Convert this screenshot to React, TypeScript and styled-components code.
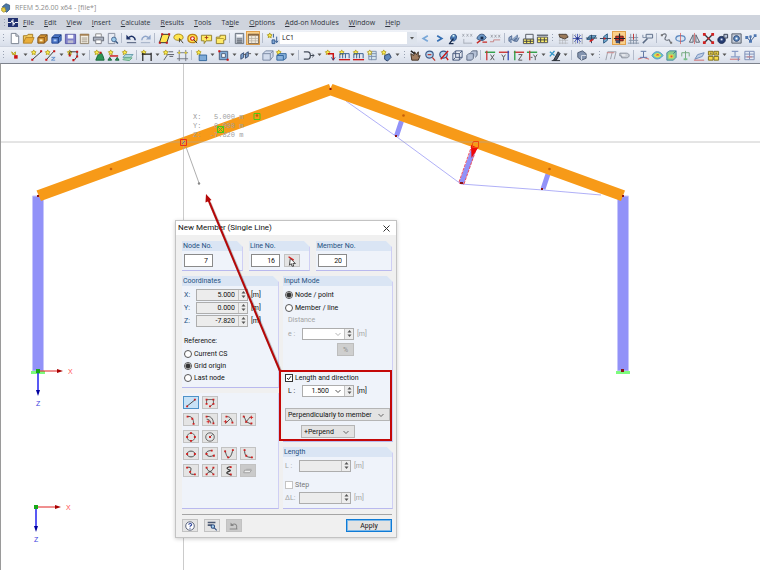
import { useState } from "react";
import styled, { createGlobalStyle, css } from "styled-components";

const GlobalStyle = createGlobalStyle`
  * {
    box-sizing: border-box;
  }
  body {
    margin: 0;
    background: #fff;
  }
  button, input, select {
    font: inherit;
    color: inherit;
    margin: 0;
    padding: 0;
  }
`;

const Window = styled.div`
  display: flex;
  flex-direction: column;
  min-height: 100vh;
  font: 7px/10px Roboto, "Liberation Sans", sans-serif;
  color: #111;
`;
const TitleBar = styled.header`
  display: flex;
  align-items: center;
  gap: 4px;
  height: 15px;
  padding-left: 1px;
  font-family: "Open Sans", sans-serif;
  color: #8c8c8c;
`;
const MenuBar = styled.nav`
  display: flex;
  align-items: center;
  gap: 10px;
  height: 15px;
  padding-left: 1px;
  background: #cfd4dd;
  font-family: "Open Sans", sans-serif;
  color: #30343e;
  overflow: hidden;
`;
const MenuLogo = styled.span`
  display: flex;
  align-items: center;
  margin-right: -5px;
`;
const MenuButton = styled.button`
  border: 0;
  background: none;
  white-space: nowrap;
`;
const ToolBar = styled.div`
  display: flex;
  align-items: center;
  height: 17px;
  background: linear-gradient(#eff2f8, #e3e8f1 60%, #d8deea);
  border-bottom: 1px solid #cdd3df;
  overflow: hidden;
  & + & {
    height: 16px;
    border-bottom: 0;
  }
`;
const Grip = styled.span`
  flex: none;
  width: 7px;
  height: 10px;
  background: radial-gradient(circle, #9aa3b3 0 1px, transparent 1px) 2px 0 / 3px 3px repeat-y;
`;
const Separator = styled.span`
  flex: none;
  width: 5px;
  height: 10px;
  border-left: 1px solid #b4bccb;
  margin-left: 2px;
  margin-right: -2px;
`;
const ToolButton = styled.button<{ $active?: boolean }>`
  display: flex;
  align-items: center;
  justify-content: center;
  flex: none;
  width: 14px;
  height: 14px;
  border: 0;
  background: none;
  ${(p) =>
    p.$active &&
    css`
      background: #fbd08a;
      box-shadow: inset 0 0 0 1px #e0a04c;
    `}
`;
const MoreButton = styled.button`
  display: flex;
  align-items: center;
  justify-content: center;
  flex: none;
  width: 8px;
  height: 14px;
  border: 0;
  background: none;
`;
const LoadCase = styled.label`
  display: grid;
  grid-template-columns: 1fr 10px;
  align-items: center;
  flex: none;
  width: 137px;
  height: 12px;
  margin: 0 1px;
  background: #fff;
  font-family: "Open Sans", sans-serif;
  select {
    grid-area: 1 / 1 / 2 / 3;
    appearance: none;
    border: 0;
    padding-left: 2px;
    background: none;
  }
  svg {
    grid-area: 1 / 2;
    width: 10px;
    height: 12px;
    background: #dde3ec;
    pointer-events: none;
  }
`;

const Canvas = styled.main`
  position: relative;
  flex: 1;
  min-height: 500px;
  overflow: hidden;
  border-top: 1px solid #7d828c;
  border-left: 1px solid #9a9a9a;
  background: #fff;
`;
const Drawing = styled.svg`
  position: absolute;
  top: 0;
  left: 0;
  overflow: visible;
  pointer-events: none;
`;

const Dialog = styled.form`
  position: absolute;
  top: 156px;
  left: 174px;
  width: 222px;
  border: 1px solid #c3c3c3;
  background: #f0f0f0;
  box-shadow: 0 1px 4px rgba(0, 0, 0, 0.2);
`;
const DialogTitle = styled.div`
  display: flex;
  align-items: center;
  justify-content: space-between;
  height: 14px;
  padding: 0 6px 0 2px;
  background: #fff;
  font-size: 8px;
`;
const CloseButton = styled.button`
  display: flex;
  border: 0;
  background: none;
`;
const DialogBody = styled.div`
  display: flex;
  flex-direction: column;
  gap: 5px;
  padding: 6px 4px 5px 6px;
`;
const TopRow = styled.div`
  display: grid;
  grid-template-columns: 61px 61px 1fr;
  gap: 6px;
`;
const Columns = styled.div`
  display: grid;
  grid-template-columns: 97px 1fr;
  gap: 4px;
`;
const Column = styled.div`
  display: flex;
  flex-direction: column;
  gap: 5px;
`;
const Group = styled.fieldset<{ $grow?: boolean }>`
  display: flex;
  flex-direction: column;
  flex: ${(p) => (p.$grow ? 1 : "none")};
  min-width: 0;
  margin: 0;
  padding: 0;
  border: 0;
  border-right: 1px solid #cfcff4;
  border-bottom: 1px solid #b9b9ee;
  background: #eff3fa;
  clip-path: polygon(0 0, calc(100% - 6px) 0, 100% 6px, 100% 100%, 0 100%);
`;
const GroupTitle = styled.div`
  height: 10px;
  padding-left: 1px;
  background: #dae5f4;
  color: #24507f;
`;
const GroupBody = styled.div<{ $height: number }>`
  display: flex;
  flex-direction: column;
  min-height: ${(p) => p.$height}px;
  padding: 2px;
`;
const NumberRow = styled.div`
  display: flex;
  align-items: center;
  gap: 4px;
  height: 15px;
`;
const NumberInput = styled.input`
  width: 29px;
  height: 13px;
  padding-right: 4px;
  border: 1px solid #8a8a8a;
  background: #fff;
  text-align: right;
`;
const FieldRow = styled.div<{ $muted?: boolean; $indent?: boolean }>`
  display: flex;
  align-items: center;
  gap: 3px;
  height: 13px;
  padding-left: ${(p) => (p.$indent ? 3 : 0)}px;
  color: ${(p) => (p.$muted ? "#a3a3a3" : "#111")};
`;
const FieldLabel = styled.label<{ $wide?: boolean }>`
  width: ${(p) => (p.$wide ? 11 : 9)}px;
  color: ${(p) => (p.$wide ? "inherit" : "#24507f")};
`;
const SpinBox = styled.span<{ $readonly?: boolean }>`
  display: flex;
  width: 52px;
  height: 12px;
  border: 1px solid #adadad;
  background: ${(p) => (p.$readonly ? "#ececec" : "#fff")};
  input {
    flex: 1;
    min-width: 0;
    padding-right: 3px;
    border: 0;
    background: none;
    text-align: right;
  }
`;
const DropButton = styled.button`
  display: flex;
  align-items: center;
  border: 0;
  padding: 0 2px;
  background: none;
`;
const Spinner = styled.span`
  display: flex;
  flex-direction: column;
  width: 9px;
  border-left: 1px solid #c4c4c4;
  background: #ededed;
  button {
    display: flex;
    align-items: center;
    justify-content: center;
    flex: 1;
    height: 5px;
    border: 0;
    background: none;
  }
`;
const Choice = styled.label<{ $muted?: boolean; $tall?: boolean }>`
  display: flex;
  align-items: center;
  gap: 2px;
  height: ${(p) => (p.$tall ? 13 : 12)}px;
  color: ${(p) => (p.$muted ? "#777" : "#111")};
  white-space: nowrap;
`;
const Radio = styled.input`
  appearance: none;
  width: 8px;
  height: 8px;
  border: 1px solid #555;
  border-radius: 50%;
  background: #fff;
  &:checked {
    background: radial-gradient(circle, #333 0 2px, #fff 3px);
  }
`;
const Check = styled.input`
  appearance: none;
  width: 8px;
  height: 8px;
  border: 1px solid #333;
  background: #fff;
  &:checked {
    background: #fff
      url("data:image/svg+xml,%3Csvg xmlns='http://www.w3.org/2000/svg' viewBox='0 0 6 6'%3E%3Cpath d='M1 3l1.5 1.6L5 1.2' fill='none' stroke='%23222'/%3E%3C/svg%3E");
  }
  &:disabled {
    border-color: #c4c4c4;
  }
`;
const Caption = styled.div<{ $muted?: boolean }>`
  padding-left: ${(p) => (p.$muted ? 3 : 0)}px;
  height: 13px;
  line-height: 13px;
  color: ${(p) => (p.$muted ? "#a3a3a3" : "#111")};
`;
const PercentButton = styled.button`
  align-self: flex-start;
  width: 17px;
  height: 13px;
  margin: 3px 0 0 52px;
  border: 1px solid #bdbdbd;
  background: #cfcfcf;
  color: #8f8f8f;
`;
const Spacer = styled.div<{ $size: number }>`
  flex: none;
  height: ${(p) => p.$size}px;
`;
const SelectBox = styled.label<{ $width: string; $inset?: boolean }>`
  display: grid;
  grid-template-columns: 1fr 12px;
  align-items: center;
  width: ${(p) => p.$width};
  margin-left: ${(p) => (p.$inset ? 16 : 0)}px;
  border: 1px solid #b5b5b5;
  background: #e3e3e3;
  select {
    grid-area: 1 / 1 / 2 / 3;
    appearance: none;
    height: 11px;
    padding-left: 2px;
    border: 0;
    background: none;
  }
  svg {
    grid-area: 1 / 2;
    pointer-events: none;
  }
`;
const ToolPanel = styled(Group)`
  clip-path: none;
  padding: 3px 1px;
`;
const ToolGrid = styled.div`
  display: grid;
  grid-template-columns: repeat(4, 16px);
  grid-auto-rows: 13px;
  gap: 4px 3px;
`;
const SmallButton = styled.button<{ $first?: boolean; $active?: boolean; $off?: boolean }>`
  display: flex;
  align-items: center;
  justify-content: center;
  width: 16px;
  height: 13px;
  ${(p) => p.$first && "grid-column-start: 1;"}
  border: 1px solid ${(p) => (p.$active ? "#4d92c8" : "#c2c2c2")};
  background: ${(p) => (p.$active ? "#c8e2f6" : p.$off ? "#cacaca" : "#e4e4e4")};
`;
const Footer = styled.div`
  display: flex;
  align-items: center;
  gap: 6px;
  padding-top: 4px;
  border-top: 1px solid #a5a5a5;
`;
const ApplyButton = styled.button`
  width: 46px;
  height: 13px;
  margin-left: auto;
  border: 1px solid #0f7bd6;
  outline: 1px solid #7db9ea;
  outline-offset: -2px;
  background: #e3e3e3;
`;

// every shape is [path, stroke, fill, stroke width], on a 14 by 14 grid
type Shape = [string, string?, string?, number?];

const star = "M4 1l.8 1.7 1.8.3-1.3 1.3.3 1.8L4 5.3l-1.6.8.3-1.8L1.4 3l1.8-.3z";
const dot = (x: number, y: number, r = 1.1) => `M${x - r} ${y - r}h${2 * r}v${2 * r}h${-2 * r}z`;

const icons: Record<string, Shape[]> = {
  newFile: [["M3.5 1.5h5l3 3v8h-8z", "#777f8c", "#fff"], ["M8.5 1.5v3h3", "#777f8c"]],
  open: [["M1.5 12V4h4l1-1.5h5V6", "#a57a20", "#f1cb62"], ["M1.5 12l2.5-6h9l-2.5 6z", "#b58428", "#e9ae3b"]],
  boxBrown: [["M2 6l3-3h7v6l-3 3H2z", "#744c18", "#d39331"], ["M2 6h7v6M9 6l3-3", "#8b581b"], ["M4 8h3v2H4z", "", "#fff0be"]],
  boxBlue: [["M2 6l3-3h7v6l-3 3H2z", "#284a93", "#4c78c9"], ["M2 6h7v6M9 6l3-3", "#183978"], ["M4 8h3v2H4z", "", "#b7cef3"]],
  save: [["M1.5 2.5h11v10h-11z", "#5757a5", "#8181ca"], ["M4 3h6v4H4z", "", "#f5f5fb"], ["M4 9h6v3H4z", "", "#bcbccf"]],
  sheet: [["M2.5 2.5h9v10h-9z", "#8d7d67", "#f4eee1"], ["M2 2h10v2H2z", "", "#a48052"], ["M4 6.5h6M4 8.5h6M4 10.5h6", "#a39a8c"]],
  print: [["M4 5V2h6v3", "#888", "#fff"], ["M1.5 5.5h11v4h-11z", "#606774", "#aab1bf"], ["M4 8.5h6v4H4z", "#7c7f88", "#fff"]],
  preview: [["M2.5 1.5h7v11h-7z", "#8890a0", "#e7ebf3"], ["M6 8a2.5 2.5 0 1 0 5 0 2.5 2.5 0 1 0-5 0", "#45658e", "#9ccbeb"], ["M10.4 10l2.4 2.4", "#38557c", "", 1.6]],
  undo: [["M3 7c4-5 8-1 8 2", "#1c3065", "", 1.6], ["M1.5 3v5h5z", "", "#1c3065"], ["M2 11.5h10", "#44516f"]],
  redo: [["M11 7c-4-5-8-1-8 2", "#8fa5c9", "", 1.5], ["M12.5 3v5h-5z", "", "#8fa5c9"], ["M2 11.5h10", "#9eabc1"]],
  plane: [["M4.5 2.5h8l-3 9h-8z", "#292929", "#ffe650"], [dot(4.5, 2.5) + dot(12, 2.5) + dot(9.5, 11.5) + dot(2, 11.5), "", "#c31b1b"]],
  lasso: [["M2 6c0-5 10-5 10 0 0 4-10 4-10 0", "#a48618", "#ffe650"], ["M8 7l4 5M8 7v4", "#463e30"]],
  target: [["M2 7c0-6 10-6 10 0s-10 6-10 0", "#bd8516", "#ffe650", 1.4], ["M5 7c0-2.5 4-2.5 4 0s-4 2.5-4 0", "#ce1515", "#fff", 1.2], ["M8 8l4 4", "#333"]],
  note: [["M1.5 3.5h11v6h-6l-2 3v-3h-3z", "#917f2a", "#ffec62"], ["M7 4v4M5 6h4", "#a43b18"]],
  folder: [["M2.5 5.5h4v-2h6v5h-2v4h-8z", "#8f7a29", "#ffeb69"], ["M2.5 7h8", "#b39a35"]],
  calculator: [["M2.5 1.5h9v11h-9z", "#666e79", "#cbd0d9"], ["M4 3h6v2H4z", "", "#fff"], ["M4 7.5h6M4 9.5h6M4 11h6", "#4c535d"]],
  table: [["M1.5 2.5h11v10h-11z", "#76624c", "#f1e9dc"], ["M1 2h12v2H1z", "", "#8a6844"], ["M5 4v8M9 4v8M2 7h10M2 9.5h10", "#b8b0a2", "", 0.8]],
  loadCase: [[star, "#a89520", "#fff04c"], ["M6.5 8.5h3v4h-3z", "#31598e", "#80a6d5"], ["M8 2v4M11.5 5v6M10 9.5l1.5 2 1.5-2", "#31598e"]],
  prev: [["M9.5 4L4.5 7l5 3", "#78a7d8", "", 1.8]],
  next: [["M4.5 4l5 3-5 3", "#356fb3", "", 1.8]],
  results: [["M4 8c-1-7 8-7 6-1-1 3-3 3-5 2", "#24477c", "#4c7bb4"], ["M7 7l-4 5M2 12.5h5", "#182b4d", "", 1.4], ["M6 3h2v2H6z", "", "#dff"]],
  values: [["M1.5 2l2 3M3.5 2l-2 3M6 2l2 3M8 2L6 5M10 2l2 3M12 2l-2 3", "#9a9fa8", "", 0.8], ["M3 7.5v5M3 12h9", "#a7adb8"]],
  view: [["M2 7c2-6 8-6 10-1-2 4-7 4-10 1z", "#35527b", "#6e9ac8"], ["M6 5h3v3H6z", "", "#172b4c"], ["M2 12l4-3M8 11h5", "#c62a24", "", 1.4]],
  numbers: [["M2 3l2 3M4 3L2 6M6 3l2 3M8 3L6 6M10 3l2 3M12 3l-2 3", "#92969e", "", 0.8], ["M1 10.5h4v-2h7", "#c68282"]],
  glasses: [["M1 10V6l3-2v4l3 2 3-4V3M4 8c-3 0-3 4 0 3M9 7c-3 0-3 4 1 3l2-4", "#536b92", "#8fa6c6"]],
  tableGear: [["M1.5 7.5h11v5h-11z", "#494c54", "#fff16a"], ["M4 2.5h8v5H4z", "#51565f", "#e9eef5"], ["M5 8v4M9 8v4M2 10h10", "#3b3e44"]],
  tableSum: [["M1.5 5.5h11v6h-11z", "#494c54", "#fff16a"], ["M5 6v5M9 6v5M2 8.5h10", "#3b3e44"], ["M1 3.5h12", "#69707d", "", 1.6]],
  snapHand: [["M2 3h10M2 6h10M2 9h10M2 12h10M3 2v11M6 2v11M9 2v11", "#b2b4b8", "", 0.7], ["M2 2.5h8l2 3-4 2-5-2z", "#4d4035", "#9b7a5a"]],
  snapGrid: [["M2 2v11M5 2v11M9 2v11M12 2v11", "#888c96", "", 0.7], ["M7 2v10M2 7h10M3.5 3.5l7 7M10.5 3.5l-7 7", "#3c4db3", "", 0.9], [dot(7, 7), "", "#1c2a7b"]],
  planeXY: [["M2 8l3-4h7l-3 4z", "#28567f", "#74add1"], ["M1 6.5h12M7 3v9", "#28415c"], ["M5 9l4-2v2l-4 2z", "", "#d22121"]],
  planeYZ: [["M5 5l4-3v7l-4 3z", "#28567f", "#74add1"], ["M1 7h12", "#28415c"], ["M5 6h2v2H5z", "", "#d22121"]],
  planeXZ: [["M3 4.5h8v5H3z", "#661616", "#d3302b"], ["M7 1.5v11M1 7h12", "#1f1f2a", "", 1.3], ["M3 9h4v3H3z", "", "#3e5279"]],
  guide: [["M4 2v11M7 2v11M10 2v11M1 12h12M2 9h10M2 6h10", "#8794a8"], ["M7 2v6", "#c23535"]],
  hammer: [["M2 12l5-5", "#5a6b85", "", 1.6], ["M5.5 2.5h7v4h-7z", "#5a6b85", "#dde5f0"], ["M2 3v3h4", "#7c8ba3"]],
  curve: [["M2 3.5c3-3 6-1 4 2s1 4 3 3 1 3 3 3", "#666c77", "", 1.2], [dot(2, 3.5) + dot(12, 11.5), "", "#777"]],
  rotate: [["M2 7c0-4 10-4 10 0s-10 4-10 0", "#5b88bf", "#dbe7f4", 1.3], ["M7 1v12", "#d65858", "", 0.8]],
  mirror: [["M5.5 3v8H1.5zM8.5 3v8h4z", "#565d69"], ["M7 1v12", "#d65858", "", 0.8]],
  split: [["M3 3l8 8M11 3l-8 8", "#30363f", "", 1.4], [dot(2.5, 2.5, 1.5) + dot(11.5, 2.5, 1.5) + dot(2.5, 11.5, 1.5) + dot(11.5, 11.5, 1.5) + dot(7, 7), "", "#d22121"]],
  solid: [["M2 8.5c0-5 8-5 8 0s-8 5-8 0", "#16254a", "#263d74"], ["M8.5 2.5h4v4h-4z", "#333c4f", "#b8c4db"], ["M5 7h2v2H5z", "", "#e3eaf8"]],
  settings: [["M2 2h10v10H2z", "#535b68", "#c4cbd8"], ["M4 7c0-4 6-4 6 0s-6 4-6 0", "#223d69", "#5785bd"], ["M6 6h2v2H6z", "", "#fff"]],
  network: [["M3 6l4 4 5-6M7 10V4", "#3b5c90"], [dot(3, 6, 1.6) + dot(7, 10, 1.6) + dot(12, 4, 1.5) + dot(7, 5, 1.3), "", "#4f77b1"]],

  node: [["M4 3l2 2 2-2v3H5z", "#b09c20", "#fff04c"], [dot(8.5, 8.5, 1.9), "", "#cc1414"]],
  line: [[star, "#b5a12a", "#fff04c"], ["M3 11l9-8", "#333"], [dot(2.5, 11.5) + dot(12, 2.5), "", "#cc1414"]],
  member: [[star, "#b5a12a", "#fff04c"], ["M3 11l8-9", "#333"], ["M8 9h4l-4 3h4", "#5f8dca"], [dot(2.5, 11.5) + dot(11, 2.5), "", "#cc1414"]],
  polyline: [[star, "#b5a12a", "#fff04c"], ["M4 7V3h8v5l-3 4", "#333"], [dot(4, 7) + dot(12, 3) + dot(12, 8) + dot(8, 12), "", "#cc1414"]],
  support: [[star, "#b5a12a", "#fff04c"], ["M3 12l2-5 4-3 2 4 1 4z", "#19613a", "#2d9554"], [dot(8, 4), "", "#cc1414"]],
  lineSupport: [[star, "#b5a12a", "#fff04c"], ["M3 7.5h9", "#cc1414", "", 1.5], ["M1 12l2-3 2 3zM9 12l2-3 2 3z", "#19613a", "#2d9554"]],
  surfSupport: [[star, "#b5a12a", "#fff04c"], ["M2 9l3-3h8l-3 3z", "#5d97a6", "#b9dfe3"], ["M2 11.5l2-2h8l-3 3z", "#62a785", "#a5dcb9"]],
  dimension: [[star, "#b5a12a", "#fff04c"], ["M2 5.5h10M3 4v9M12 4v9", "#222", "", 1.3]],
  comment: [[star, "#b5a12a", "#fff04c"], ["M2 12l4-6h7M7 3h5M8 8h4", "#555b66"]],
  guideline: [["M3.5 1v12M10.5 1v12M1 4h12M1 10.5h12", "#666c77", "", 0.9], [dot(3.5, 4) + dot(10.5, 4), "", "#d9c531"]],
  surface: [[star, "#b5a12a", "#fff04c"], ["M4.5 6.5h8v6h-8z", "#31649b", "#7fabd8"]],
  opening: [["M2.5 2.5h9v9h-9z", "#4b5e7c", "#7fabd8"], ["M5 5h4v4H5z", "#4b5e7c", "#fff"], [dot(2.5, 2.5) + dot(11.5, 11.5), "", "#cc1414"]],
  solidSet: [["M2 6l3-2v5l-3 2zM7 5l3-2v5l-3 2z", "#374e76", "#7fa2ce"], ["M5 6h3M10 5h3", "#555"]],
  cube: [["M2 5l3-3h8v6l-3 4H2zM2 5h8v7M10 5l3-3", "#7887a2", "#d2dced"]],
  cubeNew: [[star, "#b5a12a", "#fff04c"], ["M2 7l3-2h7v5l-3 2H2zM2 7h7v5", "#31649b", "#8bb3dc"]],
  connect: [["M2 3h4c4 0 4 8 0 8H2M9 7h4", "#434b58", "", 1.3], ["M11 5l2 2-2 2", "#434b58"]],
  nodeLoad: [[star, "#b5a12a", "#fff04c"], ["M4 5h6v7", "#cc1414", "", 1.6], ["M8 9l2 3 2-3", "#284c83"]],
  memberLoad: [[star, "#b5a12a", "#fff04c"], ["M2 5h10M2 5v5M5 5v5M8 5v5M12 5v5", "#31598e"], ["M1 11.5h12", "#cc1414", "", 1.4]],
  surfaceLoad: [["M3 2.5h8v9H3zM3 5h8M3 8h8M6 3v9", "#7c8fac", "#d5e5ef"], [star, "#b5a12a", "#fff8a0"]],
  freeLoad: [[star, "#b5a12a", "#fff04c"], ["M5 7l5-2 2 4-4 4-3-2z", "#253b62", "#6089bd"]],
  pan: [["M3 12L2 5l3 2 1-4 2 3 2-3v5l2-1-2 5z", "#3e2e22", "#a17e61"], ["M2 2l4 3", "#222", "", 1.5]],
  zoomIn: [["M3 6c0-5 8-5 8 0s-8 5-8 0", "#3d5b8a", "#b9d6ee", 1.3], ["M10 9l3 3.5M5 6h4", "#bd3b34", "", 1.4]],
  zoomOut: [["M3 6c0-5 8-5 8 0s-8 5-8 0", "#3d5b8a", "#b9d6ee", 1.3], ["M4 11l8-9M10 9l2 3", "#cc1414", "", 1.5]],
  wire: [["M2 5l3-3h7v7l-3 3H2zM2 5h7v7M9 5l3-3M5 2v7h7M5 9l-3 3", "#46587a"]],
  layers: [["M2 7l2-2h5v5l-2 2H2zM6 4l2-2h5v5l-2 2", "#5b6982", "#b5c1d6"]],
  viewX: [["M1 3.5h11", "#2b9d42", "", 1.5], ["M3 2v10", "#c93434", "", 1.4], ["M7 6l4 6M11 6l-4 6", "#555"]],
  viewY: [["M1 3.5h11", "#c93434", "", 1.5], ["M11 2v10", "#334bb5", "", 1.4], ["M4 6l2 3 2-3M6 9v3", "#555"]],
  viewZ: [["M2 3.5h11", "#c93434", "", 1.5], ["M3 2v10", "#2b9d42", "", 1.4], ["M7 6h4l-4 6h4", "#555"]],
  viewMinus: [["M1 3.5h11", "#2b9d42", "", 1.5], ["M4 2v10", "#c93434", "", 1.4], ["M5 9h2M8 6l2 3 2-3M10 9v3", "#555"]],
  workplane: [["M2 3l5 4M7 2L2 8", "#3596c9", "", 1.5], ["M6 12l5-9 2 2-4 7zM4 12.5h9", "#252a32", "#495465"]],
  render: [["M3 4l5-2 4 3v5l-5 2-4-3z", "#4e5c74", "#8394b0"], ["M7 7h5M7 7v5", "#d9e0eb"]],
  diagram: [["M2 12L4 3h5l-2 8M9 3h4l-2 8", "#999ea7"], ["M3 4h8", "#cf8585"]],
  label: [["M2 4.5h7c4 0 4 5 0 5H4v-2H2z", "#868d98", "#cbd0d8"], ["M4 6.5h4", "#fff"]],
  forces: [["M4 2.5h6M7 3v6", "#566f9f"], ["M1 11l6-2 6 2", "#ce6565"], ["M3 9h8", "#5a7ab5"]],
  contour: [["M1 7c3-6 9-5 12 0-4 5-9 5-12 0", "#5894bd", "#65c7c2"], ["M3 7c3-4 6-3 8 0-3 3-5 3-8 0", "", "#e9de45"], ["M5 7c2-2 3-2 4 0z", "", "#dc5847"]],
  contourBox: [["M2 4l3-2h7v7l-3 3H2z", "#4785a1", "#8bcf8e"], ["M4 6h5v4H4z", "", "#e9de45"], ["M6 7h2v2H6z", "", "#dc4a3a"], ["M9 5l3-3", "#387493"]],
  reactions: [["M7 2v10M3 4h8M3 4v4M11 4v4", "#71a87c"], ["M5 10h4v2H5z", "", "#7ac18b"]],
  section: [["M2 11l3-5 7-2-2 4z", "#6f8cba", "#bfcee6"], ["M1 12h11", "#ce6565"]],
  cells: [["M1.5 2.5h5v4h-5zM7.5 2.5h5v4h-5zM1.5 8h5v4h-5zM7.5 8h5v4h-5z", "#7a6c1c", "#f6da4a"], ["M3 4.5h2M9 4.5h2", "#444"]],
  beam: [["M3 2.5h7M6.5 3v5M2 8.5h10", "#6a82b5"], ["M1 11h11", "#ce6565"], ["M10 9v4", "#6a82b5"]],
  grid: [["M2 2.5h10v9H2zM2 5.5h10M2 8.5h10M7 3v8", "#7c8eb5", "#e4eaf5"], ["M4 8.5h6", "#d37c7c"]],
};

// curve types offered in the member dialog
const curveIcons: Record<string, Shape[]> = {
  single: [["M2 11l10-8", "#333"], [dot(2.5, 11) + dot(11.5, 3), "", "#d02020"]],
  poly: [["M3 8V3h8v5l-4 3", "#555"], [dot(3, 8) + dot(3, 3) + dot(11, 3) + dot(11, 8) + dot(7, 11), "", "#d02020"]],
  arc3: [["M3 3c5-1 7 3 7 8", "#444"], [dot(3, 3) + dot(8.5, 5.5) + dot(10, 11.5), "", "#d02020"]],
  arcCenter: [["M3 3c5-1 8 3 8 8M3 6c3 0 5 2 5 5", "#444"], ["M3 9h4M5 7v4", "#d02020"], [dot(3, 3) + dot(11, 11), "", "#d02020"]],
  arcRadius: [["M4 3c4 0 6 2 7 7M3 11l6-6", "#444"], ["M1 9h4M3 7v4", "#d02020"], [dot(4, 3) + dot(11, 10), "", "#d02020"]],
  arcTangent: [["M2 2l3 7 6 3M4 10l6-7", "#444"], ["M9 4h4M11 2v4", "#d02020"], [dot(2, 3) + dot(5, 9) + dot(11, 11), "", "#d02020"]],
  circle3: [["M2.5 7c0-6 9-6 9 0s-9 6-9 0", "#555"], [dot(7, 2.5) + dot(2.5, 7) + dot(11.5, 7) + dot(7, 11.5), "", "#d02020"]],
  circle: [["M2 7c0-6.5 10-6.5 10 0s-10 6.5-10 0M7 7l3-3", "#555"], [dot(7, 7), "", "#d02020"]],
  ellipse: [["M2.5 7c0-4.5 9-4.5 9 0s-9 4.5-9 0", "#333"], [dot(2.5, 7) + dot(11.5, 7), "", "#d02020"]],
  ellipseArc: [["M9 3C2 3 1 7 4 9s7 0 8-1", "#333"], [dot(9, 3) + dot(3, 7) + dot(11.5, 9), "", "#d02020"]],
  parabola: [["M2.5 3c2 10 6 12 9-1", "#333"], [dot(2.5, 4) + dot(6, 11) + dot(11.5, 2.5), "", "#d02020"]],
  hyperbola: [["M3 2c0 7 2 9 9 9", "#333"], [dot(3, 2.5) + dot(5, 9) + dot(11.5, 11), "", "#d02020"]],
  spline: [["M2 3c8-2 4 4 4 6s3 2 6 2", "#333"], [dot(2.5, 3) + dot(6, 8) + dot(11.5, 11), "", "#d02020"]],
  nurbs: [["M3 3c2 6 6 6 8 0M3 11c2-4 6-4 8 0", "#333"], [dot(3, 3) + dot(11, 3) + dot(3, 11) + dot(11, 11), "", "#d02020"]],
  trajectory: [["M9 2c-7 1-4 3-1 4s-6 2-3 4l5 2", "#333", "", 1.3], [dot(9, 2.5) + dot(9, 11), "", "#d02020"]],
  onSurface: [["M3 6h8l-2 3H2z", "#999", "#eee"], ["M5 5h6", "#aaa"]],
  help: [["M2 7c0-6.5 10-6.5 10 0s-10 6.5-10 0", "#46516b", "#fff"], ["M5.5 5.5c0-2 3.5-2 3.5 0 0 1-2 1-2 2.500M7 9v1.200", "#28409a", "", 1.2]],
  details: [["M2 3h9M2 6h5", "#4c5a73", "", 1.8], ["M6 7.5a2 2 0 1 0 4 0 2 2 0 1 0-4 0M9.5 9l3 3", "#2f4d80", "#a8d2f0", 1.2]],
  back: [["M4 6c5-3 7 0 6 4M2 10.5h9", "#858585", "", 1.2], ["M3 3v4h4z", "", "#858585"]],
  pick: [["M5 4l6 6H8l1 3H7l-1-3-2 2z", "#333", "#fff"], ["M3 2l6 4", "#d02020", "", 1.5]],
};

function Glyph({ shapes, size = 12 }: { shapes: Shape[]; size?: number }) {
  return (
    <svg width={size} height={size} viewBox="0 0 14 14" aria-hidden="true">
      {shapes.map(([d, stroke, fill, width], i) => (
        <path key={i} d={d} stroke={stroke || "none"} fill={fill || "none"} strokeWidth={width || 1} />
      ))}
    </svg>
  );
}

const Chevron = ({ color = "#666" }: { color?: string }) => (
  <svg width="8" height="8" viewBox="0 0 8 8" aria-hidden="true">
    <path d="M1.5 3L4 5.5 6.5 3" fill="none" stroke={color} />
  </svg>
);

const Triangle = ({ up }: { up?: boolean }) => (
  <svg width="5" height="4" viewBox="0 0 5 4" aria-hidden="true">
    <path d={up ? "M.5 3.5h4L2.5 1z" : "M.5.5h4L2.5 3z"} fill="#555" />
  </svg>
);

const menus = [
  ["", "F", "ile"],
  ["", "E", "dit"],
  ["", "V", "iew"],
  ["", "I", "nsert"],
  ["", "C", "alculate"],
  ["", "R", "esults"],
  ["", "T", "ools"],
  ["Ta", "b", "le"],
  ["", "O", "ptions"],
  ["", "A", "dd-on Modules"],
  ["", "W", "indow"],
  ["", "H", "elp"],
];

// "|" separator, ":" grip, "v" drop-down arrow, "*" in front marks a pressed button
const mainTools =
  ": newFile open boxBrown boxBlue save sheet print preview | undo redo | plane lasso target note folder | calculator *table | loadCase LC prev next results values view numbers | glasses tableGear tableSum : snapHand snapGrid planeXY planeYZ *planeXZ guide hammer | curve rotate mirror split solid settings network :";
const modelTools =
  ": node v line member v polyline v | support lineSupport surfSupport | dimension v comment guideline | surface v opening v solidSet v cube cubeNew v | connect v nodeLoad memberLoad memberLoad surfaceLoad freeLoad v : pan zoomIn zoomOut wire layers | viewX viewY viewZ viewMinus v workplane v | render v : diagram label | forces contour contourBox reactions section cells v beam grid";

function Tools({ items, label }: { items: string; label: string }) {
  return (
    <ToolBar role="toolbar" aria-label={label}>
      {items.split(" ").map((item, i) => {
        if (item === ":") return <Grip key={i} />;
        if (item === "|") return <Separator key={i} />;
        if (item === "v")
          return (
            <MoreButton key={i} aria-label="More">
              <Triangle />
            </MoreButton>
          );
        if (item === "LC")
          return (
            <LoadCase key={i}>
              <select aria-label="Load case">
                <option>LC1</option>
              </select>
              <svg viewBox="0 0 10 12" aria-hidden="true">
                <path d="M3 5h4L5 7.5z" fill="#555" />
              </svg>
            </LoadCase>
          );
        const name = item.replace("*", "");
        return (
          <ToolButton key={i} aria-label={name} $active={item.startsWith("*")}>
            <Glyph shapes={icons[name]} size={13} />
          </ToolButton>
        );
      })}
    </ToolBar>
  );
}

function Axes({ x, y }: { x: number; y: number }) {
  return (
    <g transform={`translate(${x} ${y})`} fontFamily="Liberation Sans, sans-serif" fontSize="7">
      <path d="M0 0H20" stroke="#e02020" />
      <path d="M19 -2l6 2-6 2z" fill="#a80000" />
      <path d="M0 0V20" stroke="#2222f0" strokeWidth="1.5" />
      <path d="M-2 19h4l-2 6z" fill="#0000a0" />
      <rect x="-2" y="-2" width="4" height="4" fill="#18a818" />
      <text x="30" y="3" fill="#ff5050">X</text>
      <text x="-2" y="35" fill="#4040e0">Z</text>
    </g>
  );
}

const readout = ["X:   5.000 m", "Y:   0.000 m", "Z:  -7.820 m"];

function Model() {
  return (
    <Drawing width="760" height="506" viewBox="1 64 760 506">
      <g fill="#9292f8" stroke="#c6c6fb">
        <path d="M32.500 196h11v175h-11zM617.500 196h11v175h-11z" />
      </g>
      <path d="M31 371h14v3H31zM616 371h14v3h-14z" fill="#7dfb7d" />
      <path d="M346 101l51 36 64 47 82 6 58 5" fill="none" stroke="#9c9cf5" strokeWidth="0.8" />
      <g stroke="#9292f8" strokeWidth="5">
        <path d="M396.500 136l5-15M461.500 183l13-36M543 189l5-15" />
      </g>
      <path d="M459 182l13-37M464 184l13-37M459 183l5 1" stroke="#ee2a3a" strokeWidth="0.8" strokeDasharray="3 1" />
      <path d="M36.500 190.500L329 84l1.500 4 2-4L625 190.500 621 201 330.500 95.500 41 201z" fill="#f79a18" />
      <g fill="#a0a0a0" fontFamily="Liberation Mono, monospace" fontSize="7">
        {readout.map((line, i) => (
          <text key={line} x="193" y={119 + i * 9}>
            {line.replace(/ /g, "\u00a0")}
          </text>
        ))}
      </g>
      <path d="M-2000 142H4000M183.500 -1000V3000" stroke="#a8a8a8" strokeOpacity="0.6" />
      <g fill="#c4600c">
        <circle cx="111" cy="169" r="1.3" />
        <circle cx="257" cy="115.500" r="1.3" />
        <circle cx="403.500" cy="115.500" r="1.3" />
        <circle cx="549.500" cy="169" r="1.3" />
      </g>
      <path
        d="M329.500 88h2v2h-2zM37 195h2v2h-2zM622 195h2v2h-2zM395 135h2v2h-2zM460 182h3v2h-3zM541 188h2v2h-2zM621 369h3v3h-3z"
        fill="#8a1414"
      />
      <path d="M471 145l7 3-6.500 10z" fill="#f00808" />
      <path d="M472.500 143.500l1-2h5v6h-6z" fill="none" stroke="#ee4a10" />
      <path d="M180.500 139.500h6v6h-6z" fill="none" stroke="#e8301c" />
      <path d="M182 144l3-3" stroke="#777" />
      <path d="M217.500 126.500h6v6h-6zM217.500 126.500l6 6M223.500 126.500l-6 6M254 113.500h6v6h-6z" fill="none" stroke="#4cc910" />
      <path d="M186 147l13 36" stroke="#999" strokeWidth="0.8" />
      <circle cx="199" cy="183.500" r="1.2" fill="#888" />
      <Axes x={38} y={371} />
      <Axes x={36} y={507} />
    </Drawing>
  );
}

function Callout() {
  return (
    <Drawing width="760" height="506" viewBox="1 64 760 506">
      <path d="M281 372L210 203" stroke="#000" strokeOpacity="0.2" strokeWidth="3" />
      <path d="M280 371L208.500 200" stroke="#b50808" strokeWidth="2" />
      <path d="M206 194l-.500 8.500 6-2.500z" fill="#b50808" />
      <rect x="280" y="371" width="111" height="69" fill="none" stroke="#c40808" strokeWidth="2" />
    </Drawing>
  );
}

interface SpinProps {
  id: string;
  value: string;
  readonly?: boolean;
  drop?: boolean;
  disabled?: boolean;
}

function Spin({ id, value, readonly, drop, disabled }: SpinProps) {
  return (
    <SpinBox $readonly={readonly}>
      <input id={id} defaultValue={value} disabled={disabled} />
      {drop && (
        <DropButton type="button" aria-label="Values" disabled={disabled}>
          <Chevron color={disabled ? "#b5b5b5" : "#555"} />
        </DropButton>
      )}
      <Spinner>
        <button type="button" aria-label="Increase" disabled={disabled}>
          <Triangle up />
        </button>
        <button type="button" aria-label="Decrease" disabled={disabled}>
          <Triangle />
        </button>
      </Spinner>
    </SpinBox>
  );
}

const coordinates = [
  ["X", "5.000"],
  ["Y", "0.000"],
  ["Z", "-7.820"],
];
const references = ["Current CS", "Grid origin", "Last node"];
const inputModes = ["Node / point", "Member / line"];
const curveRows = [
  ["single", "poly"],
  ["arc3", "arcCenter", "arcRadius", "arcTangent"],
  ["circle3", "circle"],
  ["ellipse", "ellipseArc", "parabola", "hyperbola"],
  ["spline", "nurbs", "trajectory", "onSurface"],
];

function MemberDialog() {
  const [reference, setReference] = useState("Grid origin");
  const [mode, setMode] = useState("Node / point");
  const [curve, setCurve] = useState("single");
  const [directed, setDirected] = useState(true);

  return (
    <Dialog role="dialog" aria-label="New Member (Single Line)" onSubmit={(e) => e.preventDefault()}>
      <DialogTitle>
        New Member (Single Line)
        <CloseButton type="button" aria-label="Close">
          <svg width="7" height="7" viewBox="0 0 7 7" aria-hidden="true">
            <path d="M.5.5l6 6M6.5.5l-6 6" stroke="#333" />
          </svg>
        </CloseButton>
      </DialogTitle>
      <DialogBody>
        <TopRow>
          <Group>
            <GroupTitle>Node No.</GroupTitle>
            <GroupBody $height={19}>
              <NumberRow>
                <NumberInput aria-label="Node No." defaultValue="7" />
              </NumberRow>
            </GroupBody>
          </Group>
          <Group>
            <GroupTitle>Line No.</GroupTitle>
            <GroupBody $height={19}>
              <NumberRow>
                <NumberInput aria-label="Line No." defaultValue="16" />
                <SmallButton type="button" aria-label="Pick line">
                  <Glyph shapes={curveIcons.pick} />
                </SmallButton>
              </NumberRow>
            </GroupBody>
          </Group>
          <Group>
            <GroupTitle>Member No.</GroupTitle>
            <GroupBody $height={19}>
              <NumberRow>
                <NumberInput aria-label="Member No." defaultValue="20" />
              </NumberRow>
            </GroupBody>
          </Group>
        </TopRow>
        <Columns>
          <Column>
            <Group>
              <GroupTitle>Coordinates</GroupTitle>
              <GroupBody $height={101}>
                {coordinates.map(([axis, value]) => (
                  <FieldRow key={axis}>
                    <FieldLabel htmlFor={`coord-${axis}`}>{axis}:</FieldLabel>
                    <Spin id={`coord-${axis}`} value={value} readonly />
                    [m]
                  </FieldRow>
                ))}
                <Spacer $size={8} />
                <Caption>Reference:</Caption>
                {references.map((name) => (
                  <Choice key={name}>
                    <Radio type="radio" name="reference" checked={reference === name} onChange={() => setReference(name)} />
                    {name}
                  </Choice>
                ))}
              </GroupBody>
            </Group>
            <ToolPanel $grow>
              <ToolGrid>
                {curveRows.map((row) =>
                  row.map((name, i) => (
                    <SmallButton
                      key={name}
                      type="button"
                      aria-label={name}
                      $first={i === 0}
                      $active={curve === name}
                      $off={name === "onSurface"}
                      onClick={() => setCurve(name)}
                    >
                      <Glyph shapes={curveIcons[name]} />
                    </SmallButton>
                  ))
                )}
              </ToolGrid>
            </ToolPanel>
          </Column>
          <Column>
            <Group>
              <GroupTitle>Input Mode</GroupTitle>
              <GroupBody $height={155}>
                {inputModes.map((name) => (
                  <Choice key={name} $tall>
                    <Radio type="radio" name="mode" checked={mode === name} onChange={() => setMode(name)} />
                    {name}
                  </Choice>
                ))}
                <Caption $muted>Distance</Caption>
                <FieldRow $muted $indent>
                  <FieldLabel $wide htmlFor="distance">e :</FieldLabel>
                  <Spin id="distance" value="" drop disabled />
                  [m]
                </FieldRow>
                <PercentButton type="button" disabled>%</PercentButton>
                <Spacer $size={15} />
                <Choice $tall>
                  <Check type="checkbox" checked={directed} onChange={() => setDirected(!directed)} />
                  Length and direction
                </Choice>
                <FieldRow $indent>
                  <FieldLabel $wide htmlFor="length">L :</FieldLabel>
                  <Spin id="length" value="1.500" drop />
                  [m]
                </FieldRow>
                <Spacer $size={11} />
                <SelectBox $width="105px">
                  <select aria-label="Direction">
                    <option>Perpendicularly to member</option>
                  </select>
                  <Chevron />
                </SelectBox>
                <Spacer $size={4} />
                <SelectBox $width="54px" $inset>
                  <select aria-label="Side">
                    <option>+Perpend</option>
                  </select>
                  <Chevron />
                </SelectBox>
              </GroupBody>
            </Group>
            <Group $grow>
              <GroupTitle>Length</GroupTitle>
              <GroupBody $height={51}>
                <FieldRow $muted>
                  <FieldLabel $wide htmlFor="step-length">L :</FieldLabel>
                  <Spin id="step-length" value="" readonly disabled />
                  [m]
                </FieldRow>
                <Spacer $size={6} />
                <Choice $muted $tall>
                  <Check type="checkbox" disabled />
                  Step
                </Choice>
                <FieldRow $muted>
                  <FieldLabel $wide htmlFor="delta">ΔL:</FieldLabel>
                  <Spin id="delta" value="" readonly disabled />
                  [m]
                </FieldRow>
              </GroupBody>
            </Group>
          </Column>
        </Columns>
        <Footer>
          <SmallButton type="button" aria-label="Help">
            <Glyph shapes={curveIcons.help} />
          </SmallButton>
          <SmallButton type="button" aria-label="Details">
            <Glyph shapes={curveIcons.details} />
          </SmallButton>
          <SmallButton type="button" aria-label="Back" $off>
            <Glyph shapes={curveIcons.back} />
          </SmallButton>
          <ApplyButton type="submit">Apply</ApplyButton>
        </Footer>
      </DialogBody>
    </Dialog>
  );
}

export default function App() {
  return (
    <>
      <GlobalStyle />
      <Window>
        <TitleBar>
          <Glyph
            size={10}
            shapes={[
              ["M2 5l5-4 5 2v6l-4 4-3-2z", "#25466f", "#4a77a6"],
              ["M1 7l4-1 2 5-3 2-3-2z", "#9b8720", "#e7cf47"],
            ]}
          />
          RFEM 5.26.00 x64 - [file*]
        </TitleBar>
        <MenuBar>
          <MenuLogo>
            <Grip />
            <svg width="10" height="9" viewBox="0 0 10 9" aria-hidden="true">
              <path d="M0 0h10v9H0z" fill="#20306f" />
              <path d="M0 4.500h3l1-2 2 4 1-2h3M5 1v7" fill="none" stroke="#fff" strokeWidth="0.9" />
            </svg>
          </MenuLogo>
          {menus.map(([before, key, after]) => (
            <MenuButton key={after}>
              {before}
              <u>{key}</u>
              {after}
            </MenuButton>
          ))}
        </MenuBar>
        <Tools items={mainTools} label="Main" />
        <Tools items={modelTools} label="Model" />
        <Canvas>
          <Model />
          <MemberDialog />
          <Callout />
        </Canvas>
      </Window>
    </>
  );
}
